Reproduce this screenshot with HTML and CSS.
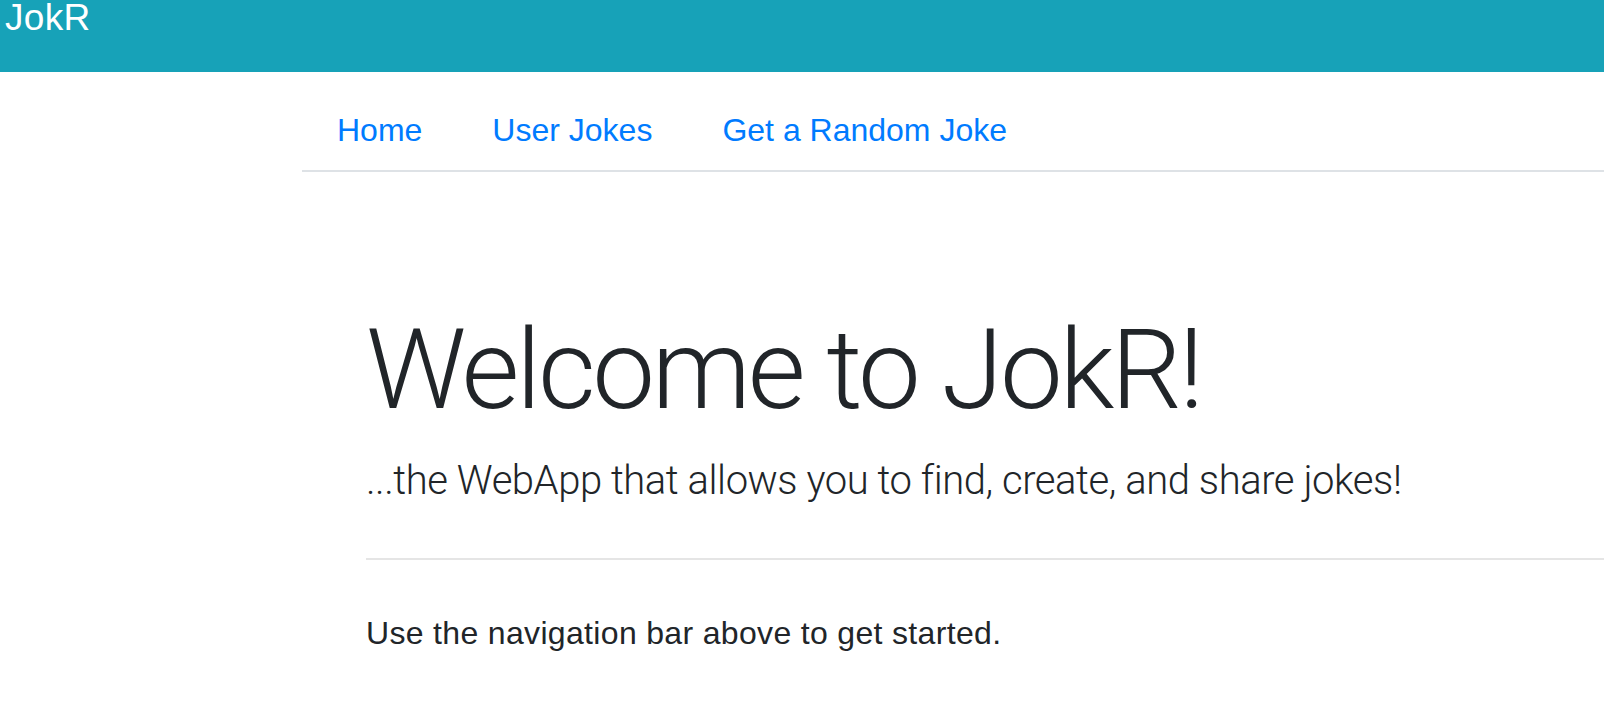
FILE: index.html
```html
<!DOCTYPE html>
<html lang="en">
<head>
<meta charset="utf-8">
<title>JokR</title>
<link rel="stylesheet" href="styles.css">
</head>
<body>
  <header class="topbar">
    <div class="brand">JokR</div>
  </header>
  <main class="main">
    <ul class="tabs">
      <li><a class="tab-link" href="#">Home</a></li>
      <li><a class="tab-link" href="#">User Jokes</a></li>
      <li><a class="tab-link" href="#">Get a Random Joke</a></li>
    </ul>
    <section class="hero">
      <h1 class="hero-title">Welcome to JokR!</h1>
      <p class="hero-lead">...the WebApp that allows you to find, create, and share jokes!</p>
      <hr class="hero-rule">
      <p class="hero-text">Use the navigation bar above to get started.</p>
    </section>
  </main>
</body>
</html>
```

FILE: styles.css
```css
html, body {
  margin: 0;
  padding: 0;
  background: #ffffff;
  overflow: hidden;
}

body {
  font-family: "Liberation Sans", Arial, sans-serif;
  color: #212529;
  font-size: 32px;
  line-height: 48px;
}

.topbar {
  height: 72px;
  background: #17a2b8;
  padding: 0 5px;
}

.brand {
  color: #ffffff;
  font-size: 37px;
  line-height: 36px;
  letter-spacing: 0.3px;
}

.main {
  margin-left: 302px;
}

.tabs {
  list-style: none;
  margin: 18px 0 0 0;
  padding: 0;
  display: flex;
  border-bottom: 2px solid #dee2e6;
}

.tab-link {
  display: block;
  padding: 16px 35px;
  color: #007bff;
  text-decoration: none;
  font-size: 32px;
  line-height: 48px;
}

.hero {
  padding: 131px 0 0 64px;
}

.hero-title {
  margin: 0;
  font-family: Roboto, "Liberation Sans", sans-serif;
  font-weight: 300;
  font-size: 112px;
  line-height: 134px;
  letter-spacing: -3.3px;
  color: #212529;
}

.hero-lead {
  margin: 14px 0 0 0;
  font-family: Roboto, "Liberation Sans", sans-serif;
  font-weight: 300;
  font-size: 40px;
  line-height: 60px;
  letter-spacing: -0.45px;
}

.hero-rule {
  margin: 47px 0 49px 0;
  border: 0;
  border-top: 2px solid rgba(0, 0, 0, 0.1);
  height: 0;
}

.hero-text {
  margin: 0;
  font-size: 32px;
  line-height: 48px;
  letter-spacing: 0.33px;
}
```
